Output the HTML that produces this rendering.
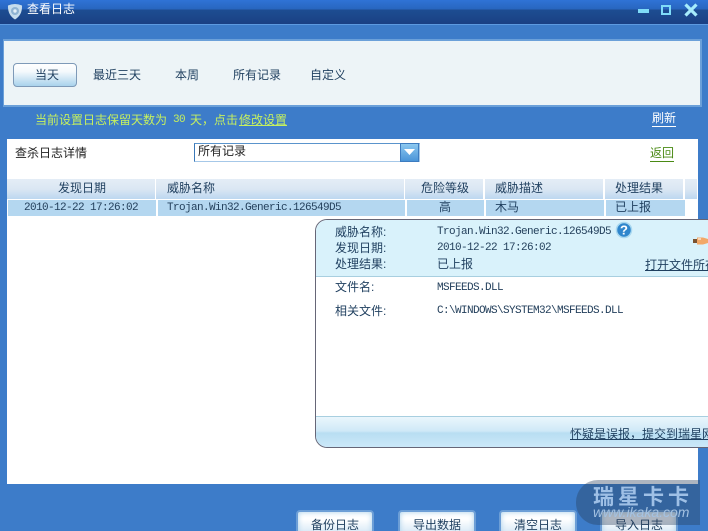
<!DOCTYPE html>
<html style="height:531px;overflow:hidden"><head><meta charset="utf-8">
<style>
html,body{margin:0;padding:0}
body{width:708px;height:531px;overflow:hidden;background:#3d7cc9;font-family:"Liberation Sans","WenQuanYi Zen Hei","Noto Sans CJK SC",sans-serif;font-size:12px;color:#1f3f5f}
#p{position:relative;width:708px;height:531px;overflow:hidden;background:#3d7cc9}
.a{position:absolute}
.t{position:absolute;line-height:14px;white-space:nowrap}
.m{position:absolute;line-height:14px;white-space:nowrap;font-family:"Liberation Mono",monospace;font-size:11px;letter-spacing:-.6px;color:#24405c}
.u{text-decoration:underline}
.btn{position:absolute;top:510px;width:74px;height:24px;background:linear-gradient(#fff 0,#fff 30%,#cfe4f4 100%);box-shadow:inset 0 0 6px #a8cfea;border:2px solid #6c9ed6;border-radius:4px;text-align:center;line-height:26px;color:#1f3f5f}
.hd{position:absolute;top:179px;height:20px;background:linear-gradient(#e4edf6 0,#dbe7f3 50%,#bcd7f0 100%);line-height:20px}
.rw{position:absolute;top:200px;height:16px;background:#b4d7f0}
</style></head><body><div id="p">

<div class="a" style="left:0;top:0;width:708px;height:25px;background:linear-gradient(#2f73d6 0,#2866bf 9px,#1d4d92 10px,#1a4084 24px)"></div>
<div class="a" style="left:0;top:24px;width:708px;height:1px;background:#5d9ae0"></div>
<svg class="a" style="left:7px;top:3px" width="16" height="17" viewBox="0 0 16 17"><path d="M1 2.500Q8 -.500 15 2.500Q15.500 12 8 16.500Q.5 12 1 2.500Z" fill="#c6dcec"/><circle cx="8" cy="8" r="4" fill="#8fb3d2"/><circle cx="8" cy="8" r="1.700" fill="#e4f0f8"/></svg>
<div class="t" style="left:27px;top:2px;color:#fff">查看日志</div>
<div class="a" style="left:638px;top:9px;width:11px;height:4px;background:#7fdcf8"></div>
<div class="a" style="left:661px;top:5px;width:6px;height:6px;border:2.500px solid #7fdcf8"></div>
<svg class="a" style="left:684px;top:3px" width="14" height="14" viewBox="0 0 14 14"><path d="M1.500 1.500L12.500 12.500M12.500 1.500L1.500 12.500" stroke="#a6ecfc" stroke-width="3.200"/></svg>

<div class="a" style="left:3px;top:39px;width:696px;height:64px;background:#edf4f7;border:2px solid #6ba0d9;border-left-width:1px"></div>
<div class="a" style="left:13px;top:63px;width:62px;height:22px;border:1px solid #7e9ab8;border-radius:4px;background:linear-gradient(#fff 0,#f4f9fc 35%,#a9d2ec 100%)"></div>
<div class="t" style="left:35px;top:68px">当天</div>
<div class="t" style="left:93px;top:68px">最近三天</div>
<div class="t" style="left:175px;top:68px">本周</div>
<div class="t" style="left:233px;top:68px">所有记录</div>
<div class="t" style="left:310px;top:68px">自定义</div>

<div class="t" style="left:35px;top:113px;color:#c6f05e">当前设置日志保留天数为</div>
<div class="t" style="left:173px;top:113px;color:#c6f05e;font-family:'Liberation Mono',monospace;font-size:11px;letter-spacing:-.6px">30</div>
<div class="t" style="left:190px;top:113px;color:#c6f05e">天，点击</div>
<div class="t u" style="left:239px;top:113px;color:#c6f05e">修改设置</div>
<div class="t" style="left:652px;top:111px;color:#fff;padding-bottom:1px;border-bottom:1px solid #fff">刷新</div>

<div class="a" style="left:7px;top:139px;width:691px;height:345px;background:#fff"></div>
<div class="t" style="left:15px;top:146px;color:#222">查杀日志详情</div>
<div class="a" style="left:194px;top:143px;width:224px;height:17px;border:1px solid #a6c8e8;border-left-color:#3a78b8;border-top-color:#5a94cc;background:#fff"></div>
<div class="a" style="left:400px;top:143px;width:19px;height:19px;background:linear-gradient(#8cc8f0,#4a94d8);box-sizing:border-box;border:1px solid #3d7cc0"></div>
<svg class="a" style="left:403px;top:149px" width="13" height="7" viewBox="0 0 13 7"><path d="M1 0H12L6.500 6Z" fill="#fff"/></svg>
<div class="t" style="left:198px;top:144px;color:#222">所有记录</div>
<div class="t" style="left:650px;top:146px;color:#4a8a14;padding-bottom:1px;border-bottom:1px solid #4a8a14">返回</div>

<div class="hd" style="left:7px;width:148px"></div>
<div class="hd" style="left:156px;width:248px"></div>
<div class="hd" style="left:405px;width:78px"></div>
<div class="hd" style="left:485px;width:118px"></div>
<div class="hd" style="left:605px;width:78px"></div>
<div class="hd" style="left:685px;width:12px"></div>
<div class="t" style="left:58px;top:181px">发现日期</div>
<div class="t" style="left:167px;top:181px">威胁名称</div>
<div class="t" style="left:421px;top:181px">危险等级</div>
<div class="t" style="left:495px;top:181px">威胁描述</div>
<div class="t" style="left:615px;top:181px">处理结果</div>

<div class="rw" style="left:8px;width:148px"></div>
<div class="rw" style="left:158px;width:247px"></div>
<div class="rw" style="left:407px;width:77px"></div>
<div class="rw" style="left:486px;width:118px"></div>
<div class="rw" style="left:606px;width:79px"></div>
<div class="m" style="left:24px;top:201px">2010-12-22 17:26:02</div>
<div class="m" style="left:167px;top:201px">Trojan.Win32.Generic.126549D5</div>
<div class="t" style="left:439px;top:200px">高</div>
<div class="t" style="left:495px;top:200px">木马</div>
<div class="t" style="left:615px;top:200px">已上报</div>

<div class="a" style="left:315px;top:219px;width:420px;height:229px;box-sizing:border-box;border:1px solid #667;border-radius:12px;background:#fff;overflow:hidden">
  <div class="a" style="left:0;top:0;width:100%;height:56px;background:#d9f2fb;border-bottom:1px solid #a8cfe0"></div>
  <div class="a" style="left:0;top:196px;width:100%;height:33px;border-top:1px solid #a8cfe0;background:linear-gradient(#eaf6fc 0,#cfe9f7 14px,#b8def2 16px,#cfeafa 100%)"></div>
</div>
<div class="t" style="left:335px;top:225px">威胁名称:</div>
<div class="t" style="left:335px;top:241px">发现日期:</div>
<div class="t" style="left:335px;top:257px">处理结果:</div>
<div class="m" style="left:437px;top:225px">Trojan.Win32.Generic.126549D5</div>
<div class="m" style="left:437px;top:241px">2010-12-22 17:26:02</div>
<div class="t" style="left:437px;top:257px">已上报</div>
<svg class="a" style="left:615px;top:221px" width="18" height="18" viewBox="0 0 18 18"><circle cx="9" cy="9" r="7.500" fill="#2f86cc" stroke="#a8d8f0" stroke-width="1.500"/><text x="9" y="13.500" text-anchor="middle" fill="#fff" font-family="Liberation Sans" font-weight="bold" font-size="13">?</text></svg>
<svg class="a" style="left:693px;top:236px" width="15" height="10" viewBox="0 0 15 10"><path d="M0 3h5v4H0z" fill="#7a5230"/><path d="M4 1.500h6l5 1.500v4l-5 1.500H4z" fill="#f2a868"/><path d="M5 3h3" stroke="#fff"/></svg>
<div class="t u" style="left:645px;top:258px;color:#1f3f5f">打开文件所在</div>
<div class="t" style="left:335px;top:280px">文件名:</div>
<div class="m" style="left:437px;top:281px">MSFEEDS.DLL</div>
<div class="t" style="left:335px;top:304px">相关文件:</div>
<div class="m" style="left:437px;top:304px">C:\WINDOWS\SYSTEM32\MSFEEDS.DLL</div>
<div class="t u" style="left:570px;top:427px">怀疑是误报，提交到瑞星网</div>

<div class="btn" style="left:296px">备份日志</div>
<div class="btn" style="left:398px">导出数据</div>
<div class="btn" style="left:499px">清空日志</div>
<div class="btn" style="left:600px">导入日志</div>

<div class="a" style="left:576px;top:480px;width:124px;height:45px;border-radius:22px 0 0 22px;background:rgba(40,60,90,.38)"></div>
<div class="t" style="left:593px;top:487px;font-size:21px;line-height:21px;font-weight:bold;letter-spacing:4px;color:#9fc0e6">瑞星卡卡</div>
<div class="t" style="left:593px;top:505px;font-size:14px;font-style:italic;color:#a4c2e2">www.ikaka.com</div>
</div></body></html>
